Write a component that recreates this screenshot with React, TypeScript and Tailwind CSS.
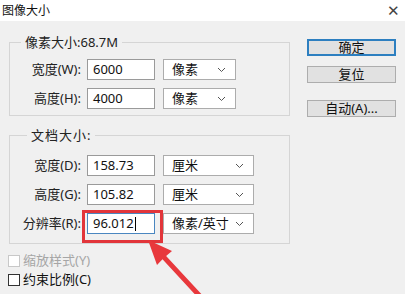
import React from 'react';

const font = { fontFamily: '"Noto Sans", "Noto Sans CJK SC", sans-serif' };

const Chevron = () => (
  <svg width="9" height="6" viewBox="0 0 9 6" className="shrink-0">
    <polyline points="1,1 4.5,4.5 8,1" fill="none" stroke="#555" strokeWidth="1" />
  </svg>
);

const Select = ({ value, wide }: { value: string; wide?: boolean }) => (
  <div
    className={`h-[21px] ${wide ? 'w-[91px]' : 'w-[73px]'} bg-white border border-[#acacac] flex items-center justify-between pl-[8px] pr-[9px] text-[13px] text-[#111]`}
  >
    <span>{value}</span>
    <Chevron />
  </div>
);

const Row = ({
  label,
  value,
  unit,
  wide,
  focused,
}: {
  label: string;
  value: string;
  unit: string;
  wide?: boolean;
  focused?: boolean;
}) => (
  <div className="flex items-center h-[21px]">
    <div className="w-[72px] text-right pr-[1px] text-[13px] text-[#222] whitespace-nowrap">{label}</div>
    <div
      className={`ml-[5px] w-[68px] h-[21px] bg-white border ${
        focused ? 'border-[#4a86c0]' : 'border-[#9a9a9a]'
      } flex items-center pl-[5px] text-[13px] text-[#111]`}
    >
      {value}
      {focused && <span className="inline-block w-px h-[14px] bg-black ml-px" />}
    </div>
    <div className="ml-[8px]">
      <Select value={unit} wide={wide} />
    </div>
  </div>
);

const Button = ({ children, primary }: { children: React.ReactNode; primary?: boolean }) => (
  <div
    className={`h-[17px] w-[89px] flex items-center justify-center text-[13px] text-[#111] bg-[#e1e1e1] ${
      primary ? 'border-2 border-[#2d7fc0]' : 'border border-[#adadad]'
    }`}
  >
    {children}
  </div>
);

const Check = ({ label, disabled }: { label: string; disabled?: boolean }) => (
  <div className="flex items-center h-[16px] gap-[3px]">
    <div
      className={`w-[12px] h-[12px] bg-white border ${disabled ? 'border-[#c8c8c8]' : 'border-[#333]'}`}
    />
    <span className={`text-[13px] ${disabled ? 'text-[#a6a6a6]' : 'text-[#111]'}`}>{label}</span>
  </div>
);

export default function App() {
  return (
    <div className="relative w-[405px] h-[294px] overflow-hidden bg-[#f0f0f0]" style={font}>
      {/* Title bar */}
      <div className="h-[21px] bg-white flex items-center justify-between pl-[2px] pr-[5px]">
        <span className="text-[12px] text-[#111]">图像大小</span>
        <span className="text-[15px] text-[#444] leading-none font-extralight">✕</span>
      </div>

      <div className="flex px-[9px] pt-[13px]">
        {/* Left column */}
        <div className="w-[283px]">
          <fieldset className="border border-[#d5d5d5] pt-[9px] pb-[6px] flex flex-col gap-[8px]">
            <legend className="ml-[11px] px-[4px] text-[13px] leading-[16px] text-[#222]">像素大小:68.7M</legend>
            <Row label="宽度(W):" value="6000" unit="像素" />
            <Row label="高度(H):" value="4000" unit="像素" />
          </fieldset>

          <fieldset className="mt-[11px] border border-[#d5d5d5] pt-[12px] pb-[9px] flex flex-col gap-[8px]">
            <legend className="ml-[17px] px-[4px] text-[13px] leading-[16px] text-[#222] tracking-[1px]">文档大小:</legend>
            <Row label="宽度(D):" value="158.73" unit="厘米" wide />
            <Row label="高度(G):" value="105.82" unit="厘米" wide />
            <Row label="分辨率(R):" value="96.012" unit="像素/英寸" wide focused />
          </fieldset>

          <div className="mt-[9px] flex flex-col gap-[3px] -ml-[1px]">
            <Check label="缩放样式(Y)" disabled />
            <Check label="约束比例(C)" />
          </div>
        </div>

        {/* Right column */}
        <div className="ml-[17px] pt-[5px] flex flex-col">
          <Button primary>确定</Button>
          <div className="mt-[10px]">
            <Button>复位</Button>
          </div>
          <div className="mt-[17px]">
            <Button>自动(A)...</Button>
          </div>
        </div>
      </div>

      {/* Annotation: red highlight box */}
      <div className="absolute left-[82px] top-[210px] w-[81px] h-[33px] border-[3px] border-[#e2353a]" />

      {/* Annotation: red arrow */}
      <svg className="absolute left-0 top-0 pointer-events-none" width="405" height="294" viewBox="0 0 405 294">
        <polygon
          points="148,240 157,265 162.5,259.3 200.5,300.4 204.1,297 166.1,255.9 172,251"
          fill="#e8383c"
        />
      </svg>
    </div>
  );
}
